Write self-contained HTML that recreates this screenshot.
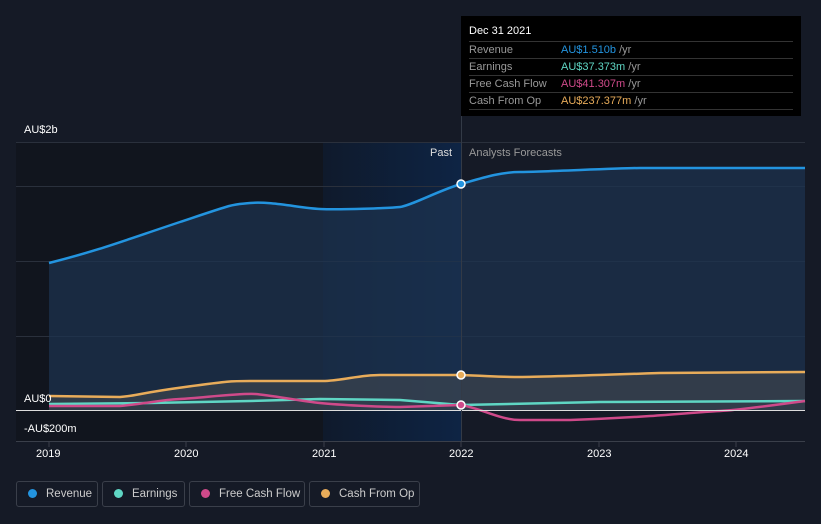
<!DOCTYPE html><html><head><style>
html,body{margin:0;width:821px;height:524px;overflow:hidden}
body{background:#151a26;font-family:"Liberation Sans",sans-serif;position:relative;color:#fff}
.t{position:absolute;font-size:11px;white-space:nowrap}
.tip{position:absolute;left:461px;top:16px;width:340px;height:100px;background:#000;font-size:11px}
.tip .r{position:absolute;left:8px;width:324px;border-top:1px solid #333;height:16px;line-height:16px;color:#999}
.tip .r b{font-weight:normal;position:absolute;left:92px}
.lg{position:absolute;top:481px;height:26px;border:1px solid #3a3f4a;border-radius:3px;font-size:11.5px;color:#ccc;line-height:24px;box-sizing:border-box;white-space:nowrap;overflow:hidden}
.lg i{display:inline-block;width:9px;height:9px;border-radius:50%;margin:0 9px 0 11px;vertical-align:-1px}
</style></head><body>
<svg width="821" height="524" style="position:absolute;left:0;top:0">
<defs><linearGradient id="g" x1="0" x2="1"><stop offset="0" stop-color="#0f1a2c"/><stop offset="1" stop-color="#0e2444"/></linearGradient></defs>
<rect x="16" y="142" width="307" height="299" fill="#11151e"/>
<rect x="323" y="142" width="138" height="299" fill="url(#g)"/>
<g stroke="#2a303c" stroke-width="1"><line x1="16" y1="142.5" x2="805" y2="142.5"/><line x1="16" y1="186.5" x2="805" y2="186.5"/><line x1="16" y1="261.5" x2="805" y2="261.5"/><line x1="16" y1="336.5" x2="805" y2="336.5"/><line x1="16" y1="441.5" x2="805" y2="441.5" stroke="#3a3f4a"/></g>
<path d="M49,263 C100,250 120,242 180,222 S230,205 250,203 S300,208 320,209 S390,208 400,207 S440,190 461,184 S500,172 520,172 S620,168 640,168 L805,168 L805,410 L49,410Z" fill="#1c3350" opacity=".7"/>
<path d="M49,396 L120,397 C135,396 140,393 185,387 S230,381 250,381 L325,381 C345,380 360,375 380,375 L461,375 C490,376 500,377 520,377 S600,375 660,373 L805,372 L805,410 L49,410Z" fill="#4a4d52" opacity=".5"/>
<path d="M49,263 C100,250 120,242 180,222 S230,205 250,203 S300,208 320,209 S390,208 400,207 S440,190 461,184 S500,172 520,172 S620,168 640,168 L805,168" fill="none" stroke="#2394df" stroke-width="2.5"/>
<path d="M49,396 L120,397 C135,396 140,393 185,387 S230,381 250,381 L325,381 C345,380 360,375 380,375 L461,375 C490,376 500,377 520,377 S600,375 660,373 L805,372" fill="none" stroke="#e8ac5a" stroke-width="2.5"/>
<path d="M49,404 L150,403 L250,401 L320,399 L400,400 L461,405 L600,402 L805,401" fill="none" stroke="#5fd6c4" stroke-width="2.5"/>
<path d="M49,406 L120,406 C150,403 160,400 180,399 S240,393 255,394 S300,401 320,403 S380,407 400,407 L461,405 C480,408 500,420 520,420 L570,420 C600,419 620,418 650,416 S700,412 720,411 S790,403 805,401" fill="none" stroke="#cf4a8a" stroke-width="2.5"/>
<line x1="16" y1="410.5" x2="805" y2="410.5" stroke="#ddd" stroke-width="1"/>
<line x1="461.5" y1="16" x2="461.5" y2="441" stroke="#333a46"/>
<circle cx="461" cy="184" r="4" fill="#2394df" stroke="#fff" stroke-width="1.5"/>
<circle cx="461" cy="375" r="4" fill="#e8ac5a" stroke="#fff" stroke-width="1.5"/>
<circle cx="461" cy="405" r="4" fill="#cf4a8a" stroke="#fff" stroke-width="1.5"/>
<g stroke="#3a3f4a"><line x1="49" y1="441" x2="49" y2="447"/><line x1="186" y1="441" x2="186" y2="447"/><line x1="324" y1="441" x2="324" y2="447"/><line x1="461" y1="441" x2="461" y2="447"/><line x1="599" y1="441" x2="599" y2="447"/><line x1="736" y1="441" x2="736" y2="447"/></g>
</svg>
<div class="t" style="left:24px;top:124px">AU$2b</div>
<div class="t" style="left:24px;top:393px">AU$0</div>
<div class="t" style="left:24px;top:423px">-AU$200m</div>
<div class="t" style="left:430px;top:147px;color:#ddd">Past</div>
<div class="t" style="left:469px;top:147px;color:#999">Analysts Forecasts</div>
<div class="t" style="left:36px;top:448px">2019</div><div class="t" style="left:174px;top:448px">2020</div><div class="t" style="left:312px;top:448px">2021</div><div class="t" style="left:449px;top:448px">2022</div><div class="t" style="left:587px;top:448px">2023</div><div class="t" style="left:724px;top:448px">2024</div>
<div class="tip"><div style="position:absolute;left:8px;top:9px;color:#fff">Dec 31 2021</div>
<div class="r" style="top:25px">Revenue<b style="color:#2394df">AU$1.510b <span style="color:#999">/yr</span></b></div>
<div class="r" style="top:42px">Earnings<b style="color:#5fd6c4">AU$37.373m <span style="color:#999">/yr</span></b></div>
<div class="r" style="top:59px">Free Cash Flow<b style="color:#cf4a8a">AU$41.307m <span style="color:#999">/yr</span></b></div>
<div class="r" style="top:76px">Cash From Op<b style="color:#e8ac5a">AU$237.377m <span style="color:#999">/yr</span></b></div>
<div class="r" style="top:93px;height:0"></div></div>
<div class="lg" style="left:16px;width:82px"><i style="background:#2394df"></i>Revenue</div>
<div class="lg" style="left:102px;width:83px"><i style="background:#5fd6c4"></i>Earnings</div>
<div class="lg" style="left:189px;width:116px"><i style="background:#cf4a8a"></i>Free Cash Flow</div>
<div class="lg" style="left:309px;width:111px"><i style="background:#e8ac5a"></i>Cash From Op</div>
</body></html>
